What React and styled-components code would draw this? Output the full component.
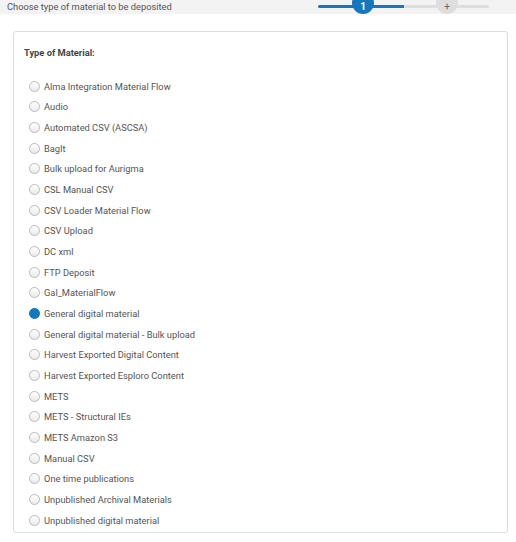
import React, { useState } from 'react';
import styled, { createGlobalStyle } from 'styled-components';

const materials = [
  'Alma Integration Material Flow',
  'Audio',
  'Automated CSV (ASCSA)',
  'BagIt',
  'Bulk upload for Aurigma',
  'CSL Manual CSV',
  'CSV Loader Material Flow',
  'CSV Upload',
  'DC xml',
  'FTP Deposit',
  'Gal_MaterialFlow',
  'General digital material',
  'General digital material - Bulk upload',
  'Harvest Exported Digital Content',
  'Harvest Exported Esploro Content',
  'METS',
  'METS - Structural IEs',
  'METS Amazon S3',
  'Manual CSV',
  'One time publications',
  'Unpublished Archival Materials',
  'Unpublished digital material',
];

const GlobalStyle = createGlobalStyle`
  body {
    margin: 0;
    background: #fff;
    font-family: Roboto, "Liberation Sans", sans-serif;
  }
`;

const App = () => {
  const [selected, setSelected] = useState('General digital material');

  return (
    <>
      <GlobalStyle />
      <Page>
        <TopBar>
          <Title>Choose type of material to be deposited</Title>
          <Stepper>
            <Track>
              <Segment $active />
              <Segment />
            </Track>
            <Step $active style={{ left: 34 }}>1</Step>
            <Step style={{ left: 118 }}>+</Step>
          </Stepper>
        </TopBar>
        <Card>
          <Label>Type of Material:</Label>
          <List>
            {materials.map(m => (
              <Option key={m} onClick={() => setSelected(m)}>
                <Radio $checked={selected === m} />
                <span>{m}</span>
              </Option>
            ))}
          </List>
        </Card>
      </Page>
    </>
  );
};

export default App;

const Page = styled.div`
  width: 516px;
  height: 542px;
  overflow: hidden;
`;

const TopBar = styled.div`
  height: 14px;
  background: #f3f3f3;
  display: flex;
  align-items: center;
  justify-content: space-between;
  padding: 0 27px 0 7px;
`;

const Title = styled.div`
  font-size: 9.3px;
  color: #555;
  line-height: 14px;
  margin-top: -1px;
`;

const Stepper = styled.div`
  position: relative;
  width: 171px;
  height: 14px;
`;

const Track = styled.div`
  position: absolute;
  top: 5px;
  left: 0;
  right: 0;
  height: 3px;
  display: flex;
`;

const Segment = styled.div`
  flex: 1;
  background: ${p => (p.$active ? '#1478bd' : '#dedede')};
  border-radius: ${p => (p.$active ? '2px 0 0 2px' : '0 2px 2px 0')};
`;

const Step = styled.div`
  position: absolute;
  top: -8px;
  width: 22px;
  height: 22px;
  border-radius: 50%;
  background: ${p => (p.$active ? '#1478bd' : '#dedede')};
  color: ${p => (p.$active ? '#fff' : '#666')};
  font-size: 10px;
  font-weight: ${p => (p.$active ? 700 : 400)};
  display: flex;
  align-items: center;
  justify-content: center;
  padding-top: 6px;
  box-sizing: border-box;
`;

const Card = styled.div`
  margin: 17px 8px 0 13px;
  border: 1px solid #d9dee3;
  border-radius: 3px;
  height: 502px;
  box-sizing: border-box;
  padding: 15px 0 0 10px;
`;

const Label = styled.div`
  font-size: 9.3px;
  font-weight: 700;
  color: #444;
  line-height: 12px;
`;

const List = styled.div`
  margin-top: 17px;
  padding-left: 5px;
  display: flex;
  flex-direction: column;
`;

const Option = styled.label`
  display: flex;
  align-items: center;
  gap: 4px;
  height: 20.67px;
  font-size: 9.3px;
  color: #555;
  cursor: pointer;
`;

const Radio = styled.span`
  width: 11px;
  height: 11px;
  border-radius: 50%;
  box-sizing: border-box;
  border: 1px solid ${p => (p.$checked ? '#1478bd' : '#bbb')};
  background: ${p =>
    p.$checked ? '#1478bd' : 'linear-gradient(#fff, #eaeaea)'};
  flex-shrink: 0;
`;
